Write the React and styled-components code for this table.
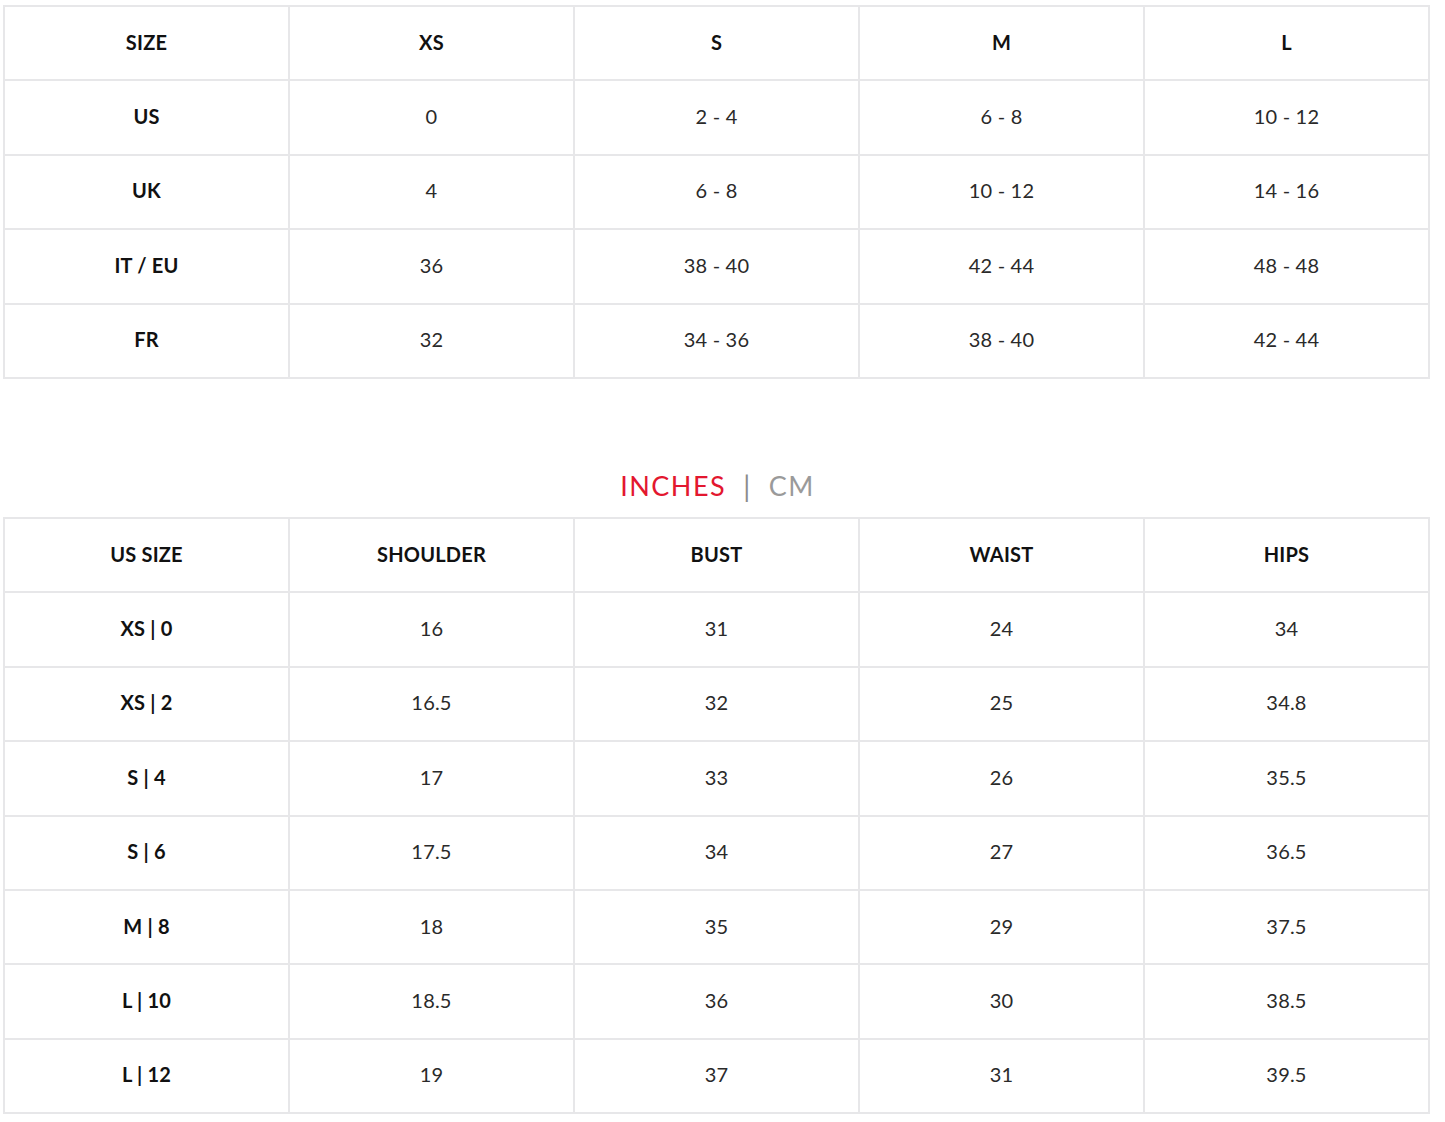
import React from "react";
import styled, { createGlobalStyle } from "styled-components";

const Global = createGlobalStyle`
  html, body { margin: 0; padding: 0; background: #fff; }
  body { font-family: Lato, "Noto Sans", "Liberation Sans", sans-serif; color: #222; }
`;

const Page = styled.div`
  padding: 5px 15px 8px 3px;
`;

const Table = styled.table`
  width: 1427px;
  border-collapse: collapse;
  table-layout: fixed;
`;

const Row = styled.tr`
  height: 74.4px;
`;

const Cell = styled.td`
  border: 2px solid #e7e7e9;
  text-align: center;
  vertical-align: middle;
  padding: 0 0 3px 0;
  font-size: 20px;
  font-weight: ${(p) => (p.$bold ? 700 : 400)};
  color: ${(p) => (p.$bold ? "#111" : "#2a2a2a")};
  letter-spacing: 0.2px;
`;

const UnitBar = styled.div`
  display: flex;
  justify-content: center;
  align-items: center;
  gap: 17px;
  margin-top: 92px;
  margin-bottom: 16px;
  font-size: 27px;
  letter-spacing: 1.5px;
  line-height: 30px;
  padding-left: 2px;
`;

const Unit = styled.span`
  color: ${(p) => (p.$active ? "#e3172f" : "#9a9a9a")};
`;

const Sep = styled.span`
  color: #8c8c8c;
  font-size: 28px;
  font-weight: 400;
`;

const sizes = [
  ["SIZE", "XS", "S", "M", "L"],
  ["US", "0", "2 - 4", "6 - 8", "10 - 12"],
  ["UK", "4", "6 - 8", "10 - 12", "14 - 16"],
  ["IT / EU", "36", "38 - 40", "42 - 44", "48 - 48"],
  ["FR", "32", "34 - 36", "38 - 40", "42 - 44"],
];

const measures = [
  ["US SIZE", "SHOULDER", "BUST", "WAIST", "HIPS"],
  ["XS | 0", "16", "31", "24", "34"],
  ["XS | 2", "16.5", "32", "25", "34.8"],
  ["S | 4", "17", "33", "26", "35.5"],
  ["S | 6", "17.5", "34", "27", "36.5"],
  ["M | 8", "18", "35", "29", "37.5"],
  ["L | 10", "18.5", "36", "30", "38.5"],
  ["L | 12", "19", "37", "31", "39.5"],
];

function Grid({ rows }) {
  return (
    <Table>
      <tbody>
        {rows.map((r, i) => (
          <Row key={i}>
            {r.map((c, j) => (
              <Cell key={j} $bold={i === 0 || j === 0}>
                {c}
              </Cell>
            ))}
          </Row>
        ))}
      </tbody>
    </Table>
  );
}

export default function App() {
  return (
    <Page>
      <Global />
      <Grid rows={sizes} />
      <UnitBar>
        <Unit $active>INCHES</Unit>
        <Sep>|</Sep>
        <Unit>CM</Unit>
      </UnitBar>
      <Grid rows={measures} />
    </Page>
  );
}
